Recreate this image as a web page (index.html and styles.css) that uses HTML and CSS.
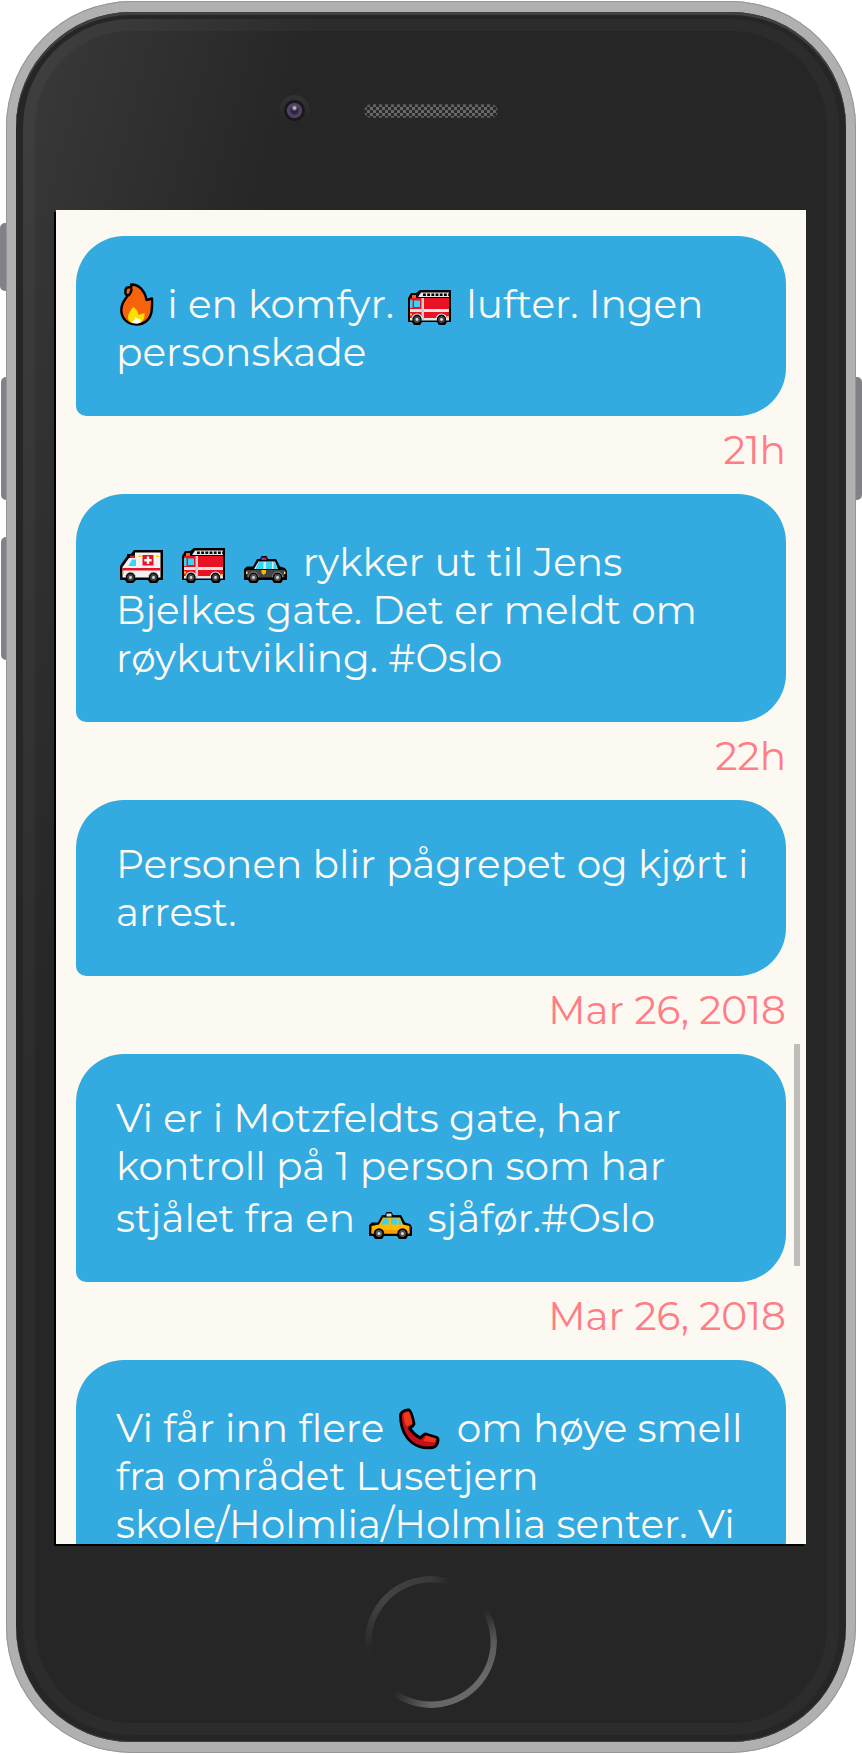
FILE: index.html
```html
<!DOCTYPE html>
<html lang="no">
<head>
<meta charset="utf-8">
<meta name="viewport" content="width=device-width, initial-scale=1">
<title>Meldinger</title>
<link rel="stylesheet" href="styles.css">
</head>
<body>
<svg class="sprite" aria-hidden="true">
  <defs>
    <symbol id="fire" viewBox="0 0 41 52">
      <path d="M15 8.500C22 8 29 14 30.500 24L36 22.500C36.500 28 36 32 35.500 36C34 44 28 48.500 20.500 48.500C11 48.500 5.300 42 5.300 34C5.300 26 9.500 23.500 12 19C8 20 9 12 11.500 11.500C13 11 14 11.500 15 11.500C16 10.500 15.500 9.500 15 8.500Z" fill="#f7630c" stroke="#000" stroke-width="2.400" stroke-linejoin="round"/>
      <path d="M12 20C15.500 17 16 14 15.200 11" fill="none" stroke="#000" stroke-width="2.200"/>
      <path d="M12.500 44C11 38 14 36 17 31C21 33 22 36 22.500 39L28.500 37C29 42 27 47.500 20 47.500C16 47.500 14 46.500 12.500 44Z" fill="#fce100"/>
      <path d="M16 46L18.500 44L19 41L22.500 43L24.500 43.500L24.500 46.500C22 47.800 18 47.800 16 46Z" fill="#fff"/>
    </symbol>
    <symbol id="firetruck" viewBox="0 0 52 52">
      <path d="M4 46V22L7 17H12L16 14H47V46H43L41 49H35L33 46H18L16 49H10L8 46Z" fill="#000"/>
      <path d="M17 16.500H45V21H14Z" fill="#e6e6e6"/>
      <path d="M19 18.800H45" stroke="#000" stroke-width="2.600" stroke-dasharray="2.800 1.400"/>
      <path d="M8 19H12V22H8Z" fill="#f7630c"/>
      <path d="M6 22H45V43H6Z" fill="#e81224"/>
      <path d="M6 24H8.500V32H6Z" fill="#35d6f5"/>
      <path d="M10 24.500H16V31H10Z" fill="#35d6f5"/>
      <path d="M6 33H45V36H6ZM6 42H45V44.500H6Z" fill="#e3e3e3"/>
      <path d="M17.500 22H20V44H17.500Z" fill="#ccc"/>
      <path d="M6 37.500H8V39.500H6ZM43 40H45V42H43Z" fill="#fc0"/>
      <path d="M8 43A5 5 0 0 1 18 43M32.500 43A5 5 0 0 1 42.500 43" fill="#222" stroke="#e6e6e6" stroke-width="1.200"/>
      <g fill="#444" stroke="#000" stroke-width="1.200"><circle cx="13" cy="43.500" r="4"/><circle cx="37.500" cy="43.500" r="4"/></g>
      <g fill="#ddd"><circle cx="13" cy="43.500" r="1.400"/><circle cx="37.500" cy="43.500" r="1.400"/></g>
    </symbol>
    <symbol id="ambulance" viewBox="0 0 52 52">
      <path d="M4 46V32L11 22V20H15L18 16H47V46H43L41 49H34L32 46H20L17 49H11L9 46Z" fill="#000"/>
      <path d="M19 18.500H44.500V43.500H6.500V33L13 24H19Z" fill="#f2f2f2"/>
      <path d="M14 21.500H19V24H14Z" fill="#e81224"/>
      <path d="M12.500 32L16 25.500H20V32Z" fill="#35d6f5"/>
      <path d="M6.500 34H44.500V36.500H6.500Z" fill="#e81224"/>
      <path d="M26.500 21H37.500V31.500H26.500Z" fill="#e81224"/>
      <path d="M32 22.500V30M28.300 26.300H35.700" stroke="#fff" stroke-width="2.400"/>
      <path d="M22.500 21.500H25.500V23H22.500ZM40 21.500H43V23H40ZM6.500 37H8V40H6.500Z" fill="#fc0"/>
      <path d="M9.500 43A5 5 0 0 1 19.500 43M32.500 43A5 5 0 0 1 42.500 43" fill="#222" stroke="#ccc"/>
      <g fill="#444" stroke="#000" stroke-width="1.200"><circle cx="14.500" cy="43.500" r="4"/><circle cx="37.500" cy="43.500" r="4"/></g>
      <g fill="#ddd"><circle cx="14.500" cy="43.500" r="1.400"/><circle cx="37.500" cy="43.500" r="1.400"/></g>
    </symbol>
    <symbol id="police" viewBox="0 0 52 52">
      <path d="M4 46V35L7 32.500H13L17 25H20L21.500 22H26.500L28 25H36L40 32.500L45 34L47 37V46H43L41 49H34L32 46H19L17 49H10L8 46Z" fill="#000"/>
      <path d="M6.500 36H44.500V43.500H6.500Z" fill="#444"/>
      <path d="M14 35L18.500 27.500H35L38 35Z" fill="#e8e8e8"/>
      <path d="M15.500 35L19 28H23.500V35ZM26 28H32V35H26ZM33.500 28H35L37.500 35H33.500Z" fill="#35d6f5"/>
      <path d="M21.500 23.500H24V26H21.500Z" fill="#35f"/><path d="M24 23.500H26.500V26H24Z" fill="#e81224"/>
      <path d="M21.500 36H26V39L23.700 41L21.500 39Z" fill="#fcb900"/>
      <path d="M6 37.500H7.500V40H6ZM44 37.500H45.500V40H44Z" fill="#fd6"/>
      <path d="M8.500 43A5 5 0 0 1 18.500 43M32.500 43A5 5 0 0 1 42.500 43" fill="#222" stroke="#888"/>
      <g fill="#555" stroke="#000" stroke-width="1.200"><circle cx="13.500" cy="43.500" r="4"/><circle cx="37.500" cy="43.500" r="4"/></g>
      <g fill="#ddd"><circle cx="13.500" cy="43.500" r="1.400"/><circle cx="37.500" cy="43.500" r="1.400"/></g>
    </symbol>
    <symbol id="taxi" viewBox="0 0 52 52">
      <path d="M4 46V35L7 32.500H13L17 25H20L21.500 22H26.500L28 25H36L40 32.500L45 34L47 37V46H43L41 49H34L32 46H19L17 49H10L8 46Z" fill="#000"/>
      <path d="M6.500 36L14 34.500L18 27.500H35L38 34.500L44.500 36V43.500H6.500Z" fill="#ffb900"/>
      <path d="M6.500 40H44.500V43.500H6.500Z" fill="#f7a000"/>
      <path d="M16 34.500L19 28.500H23.500V34.500ZM26 28.500H32V34.500H26ZM33.500 28.500H34.500L37 34.500H33.500Z" fill="#35d6f5"/>
      <path d="M21.500 23.500H26.500V26.500H21.500Z" fill="#ddd"/>
      <path d="M44 36.500H45.500V39.500H44Z" fill="#e81224"/>
      <g fill="#555" stroke="#000" stroke-width="1.800"><circle cx="14" cy="43.500" r="4.300"/><circle cx="37.500" cy="43.500" r="4.300"/></g>
      <g fill="#ddd"><circle cx="14" cy="43.500" r="1.500"/><circle cx="37.500" cy="43.500" r="1.500"/></g>
    </symbol>
    <symbol id="phone" viewBox="0 0 52 52">
      <path d="M5.500 16C5 12 10 9.500 14 10C16 11 18.500 20 19 24C18 27 15.500 27.500 14.500 28C17 32 21 36 25.500 38C27 36 28.500 34 31 34L42 37.500C44 39 43 46 38 47.500C30 49 19 47 12 37.500C8 32 5.500 24 5.500 16Z" fill="#c50f1f" stroke="#000" stroke-width="2.800" stroke-linejoin="round"/>
      <path d="M8.500 13.500L14 11.500C15.500 15 17 20 17.500 23.500L11.500 26.500C9.500 22 8.500 18 8.500 13.500Z" fill="#f03a17"/>
      <path d="M31 35.500L41 38.500L39.500 42.500L28.500 41Z" fill="#f03a17"/>
      <path d="M14.500 28C17 32 21 36 25.500 38" fill="none" stroke="#000" stroke-width="3"/>
    </symbol>
  </defs>
</svg>

<main class="phone">
  <span class="side-key mute"></span>
  <span class="side-key volume-up"></span>
  <span class="side-key volume-down"></span>
  <span class="side-key power"></span>
  <div class="body">
    <div class="face">
      <header class="top">
        <span class="camera"></span>
        <span class="speaker"></span>
      </header>
      <section class="screen" aria-label="Meldinger">
        <ul class="feed">
          <li>
            <p class="bubble"><svg class="emoji emoji-narrow" role="img" aria-label="brann"><use href="#fire"/></svg> i en komfyr. <svg class="emoji" role="img" aria-label="brannbil"><use href="#firetruck"/></svg> lufter. Ingen personskade</p>
            <time class="when">21h</time>
          </li>
          <li>
            <p class="bubble"><svg class="emoji" role="img" aria-label="ambulanse"><use href="#ambulance"/></svg> <svg class="emoji" role="img" aria-label="brannbil"><use href="#firetruck"/></svg> <svg class="emoji" role="img" aria-label="politibil"><use href="#police"/></svg> rykker ut til Jens Bjelkes gate. Det er meldt om røykutvikling. #Oslo</p>
            <time class="when">22h</time>
          </li>
          <li>
            <p class="bubble">Personen blir pågrepet og kjørt i arrest.</p>
            <time class="when" datetime="2018-03-26">Mar 26, 2018</time>
          </li>
          <li>
            <p class="bubble">Vi er i Motzfeldts gate, har kontroll på 1 person som har stjålet fra en <svg class="emoji" role="img" aria-label="taxi"><use href="#taxi"/></svg> sjåfør.#Oslo</p>
            <time class="when" datetime="2018-03-26">Mar 26, 2018</time>
          </li>
          <li>
            <p class="bubble">Vi får inn flere <svg class="emoji" role="img" aria-label="telefon"><use href="#phone"/></svg> om høye smell fra området Lusetjern skole/Holmlia/Holmlia senter. Vi</p>
          </li>
        </ul>
        <span class="scrollbar"></span>
      </section>
      <footer class="bottom">
        <button class="home" type="button" aria-label="Hjem"></button>
      </footer>
    </div>
  </div>
</main>
</body>
</html>
```

FILE: styles.css
```css
* { box-sizing: border-box; }

body {
  margin: 0;
  background: #fff;
  font-family: Montserrat, Inter, "Open Sans", sans-serif;
}

.sprite { position: absolute; width: 0; height: 0; }

.phone {
  position: relative;
  max-width: 850px;
  margin: 1px 6px;
  padding: 11px 10px;
  border-radius: 126px;
  background: #b0b0b0;
  box-shadow: inset 0 0 0 1px #969696;
}

.side-key {
  position: absolute;
  left: -5px;
  width: 5px;
  height: 123px;
  border-radius: 5px 0 0 5px;
  background: #808288;
}
.mute { left: -6px; width: 6px; top: 222px; height: 68px; }
.volume-up { top: 376px; }
.volume-down { top: 536px; }
.power { left: auto; right: -6px; width: 6px; top: 376px; border-radius: 0 5px 5px 0; }

.body {
  padding: 7px;
  border-radius: 115px;
  background: #262626;
  box-shadow: inset 0 3px 0 #404040, inset 0 -1px 0 #404040;
}

.face {
  padding: 0 21px;
  border: 12px solid rgba(255, 255, 255, 0.03);
  border-radius: 108px;
  background: linear-gradient(105deg, #3a3a3a, #262626 23%) border-box;
}

.top {
  display: grid;
  grid-template-columns: 1fr auto 1fr;
  align-items: center;
  column-gap: 54px;
  height: 179px;
  padding-bottom: 20px;
}

.camera {
  justify-self: end;
  width: 31px;
  height: 31px;
  border-radius: 50%;
  background:
    radial-gradient(circle at 50% 42%, #b9b5c0 0 1px, transparent 3px),
    radial-gradient(circle, #2c2638 0 3px, #4b3d66 5px, #51456a 7px, #19191b 8px 10px, transparent 11px),
    linear-gradient(#323232, #242424);
}

.speaker {
  width: 134px;
  height: 14px;
  border-radius: 7px;
  background: conic-gradient(#686868 25%, #292929 0 50%, #686868 0 75%, #292929 0) 0 0 / 6px 6px;
  box-shadow: inset 0 0 3px #262626;
}

/* The hard shadow is the dark edge of the glass, left and below */
.screen {
  position: relative;
  aspect-ratio: 750 / 1334;
  overflow: hidden;
  background: #fcf9f2;
  box-shadow: -2px 2px 0 #000;
}

.feed {
  margin: 0;
  padding: 26px 20px 0;
  list-style: none;
  font-size: 39px;
  line-height: 48px;
}

.bubble {
  margin: 0;
  padding: 40px 32px 40px 40px;
  border-radius: 48px 48px 48px 10px;
  background: #33aae0;
  color: #fcf9f2;
}

.emoji {
  width: 52px;
  height: 52px;
  vertical-align: -10px;
}
.emoji-narrow { width: 41px; }

.when {
  display: block;
  padding: 10px 0 20px;
  color: #ff7d85;
  text-align: right;
}

.scrollbar {
  position: absolute;
  top: 62.5%;
  right: 6px;
  width: 6px;
  height: 222px;
  background: #bfbdb9;
}

.bottom {
  display: flex;
  justify-content: center;
  height: 179px;
  padding-top: 32px;
}

.home {
  width: 132px;
  height: 132px;
  padding: 0;
  border: 0;
  border-radius: 50%;
  background: conic-gradient(#3a3a3a, #262626 18deg 60deg, #5a5a5a 90deg, #6a6a6a 125deg, #666 180deg, #262626 216deg 260deg, #444 310deg, #3a3a3a);
  -webkit-mask: radial-gradient(circle, transparent 59px, #000 60px);
  mask: radial-gradient(circle, transparent 59px, #000 60px);
}
```
